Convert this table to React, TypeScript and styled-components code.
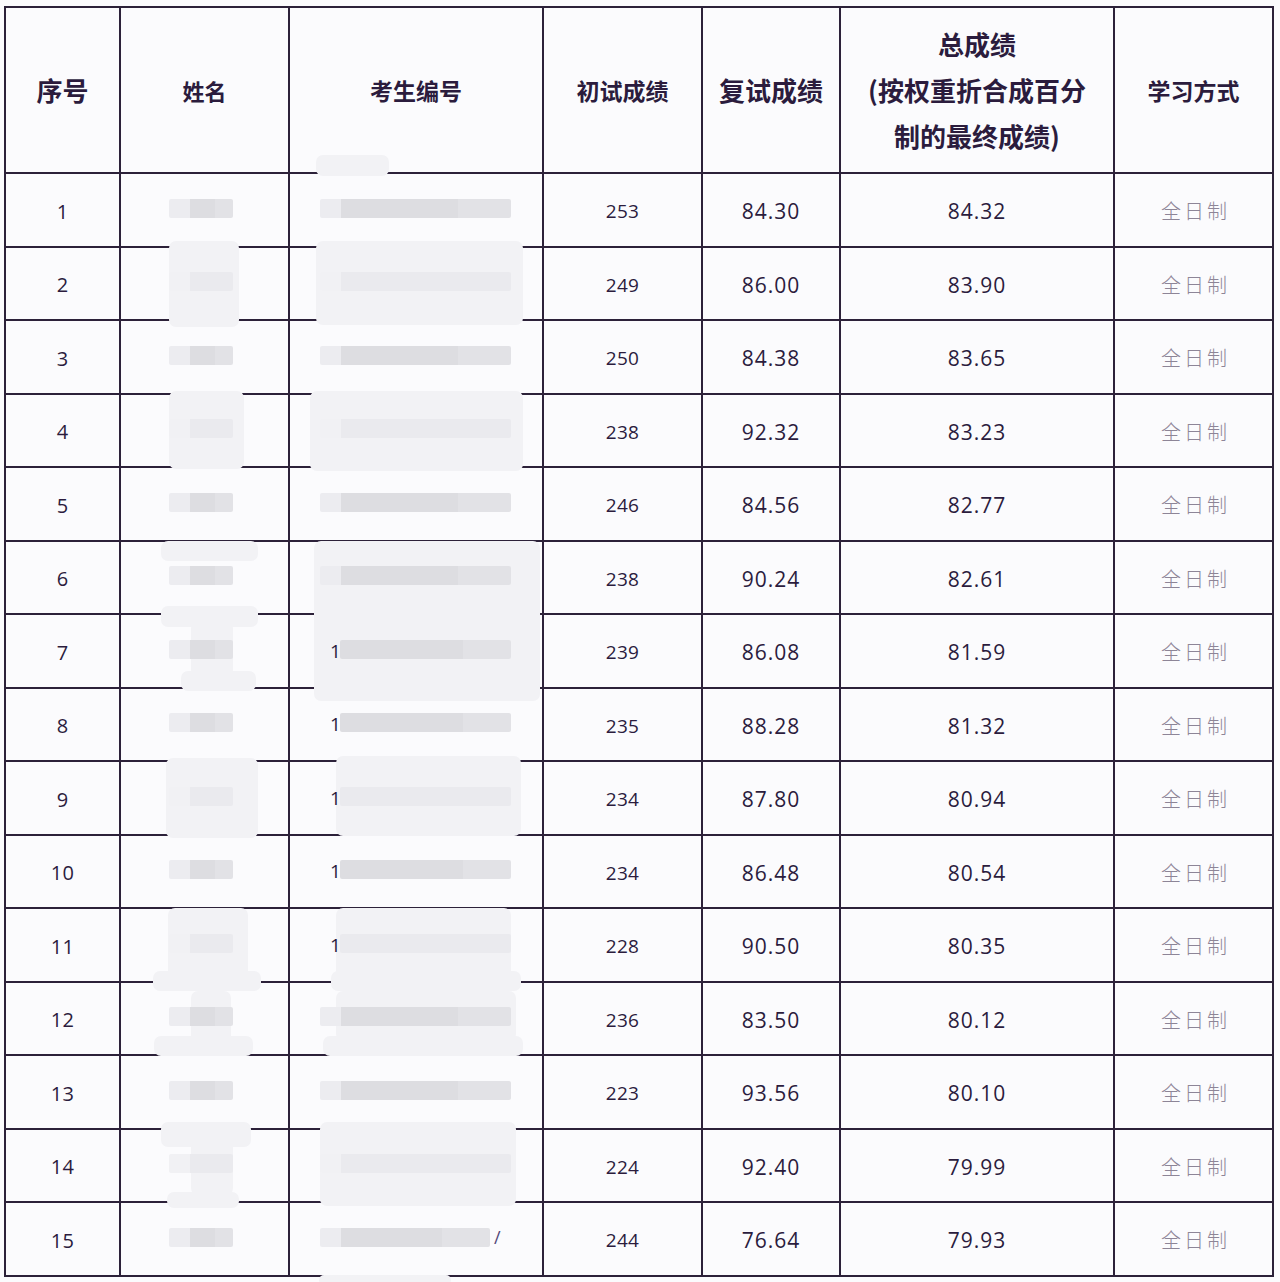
import React from "react";
import styled, { createGlobalStyle } from "styled-components";

const LINE = "#2c2139";
const INK = "#2b1c3d";

const GlobalStyle = createGlobalStyle`
  html, body {
    margin: 0;
    padding: 0;
    background: #fbfbfd;
  }
`;

const Page = styled.div`
  min-height: 1282px;
  padding: 6px 0 0 4px;
  box-sizing: border-box;
  background: #fbfbfd;
  overflow: hidden;
`;

const Sheet = styled.div`
  width: 1270px;
  box-sizing: border-box;
  border-top: 2px solid ${LINE};
  border-left: 2px solid ${LINE};
`;

const Row = styled.div<{ $h: number }>`
  display: grid;
  grid-template-columns: 115px 169px 254px 159px 138px 274px 159px;
  height: ${(p) => p.$h}px;
`;

const Cell = styled.div<{ $start?: boolean }>`
  position: relative;
  box-sizing: border-box;
  border-right: 2px solid ${LINE};
  border-bottom: 2px solid ${LINE};
  display: flex;
  align-items: center;
  justify-content: ${(p) => (p.$start ? "flex-start" : "center")};
`;

const HeadText = styled.div<{ $size: number }>`
  font-family: "Noto Sans CJK SC", "Noto Sans", sans-serif;
  font-weight: 700;
  font-size: ${(p) => p.$size}px;
  line-height: 46px;
  color: ${INK};
  text-align: center;
  white-space: nowrap;
`;

const Num = styled.span<{ $size: number }>`
  font-family: "Open Sans", "Noto Sans", sans-serif;
  font-size: ${(p) => p.$size}px;
  letter-spacing: ${(p) => (p.$size > 20 ? 1 : 0.3)}px;
  color: ${INK};
  margin-top: 2px;
`;

const Mode = styled.span`
  font-family: "Noto Sans CJK SC", sans-serif;
  font-weight: 300;
  font-size: 20px;
  letter-spacing: 3px;
  color: #8d8597;
  margin: 1px 0 0 4px;
`;

const MaskRow = styled.div<{ $pad: number }>`
  position: relative;
  z-index: 2;
  display: flex;
  align-items: center;
  padding-left: ${(p) => p.$pad}px;
  margin-top: -4px;
`;

const Bar = styled.div<{ $w: number; $lite: number; $faint?: boolean }>`
  width: ${(p) => p.$w}px;
  height: 19px;
  border-radius: 2px;
  background: ${(p) =>
    p.$faint
      ? `linear-gradient(90deg, #f1f1f4 0 ${p.$lite}px, #eaeaee ${p.$lite}px 100%)`
      : `linear-gradient(90deg, #ececf0 0 ${p.$lite}px, #dddde1 ${p.$lite}px 72%, #e2e2e6 72% 100%)`};
`;

const Prefix = styled.span`
  font-family: "Open Sans", sans-serif;
  font-size: 19px;
  color: ${INK};
  width: 10px;
  margin-top: 3px;
`;

const Slash = styled.span`
  font-family: "Open Sans", sans-serif;
  font-size: 18px;
  color: #55497a;
  margin-left: 4px;
`;

const Patch = styled.div<{ $l: number; $t: number; $w: number; $h: number }>`
  position: absolute;
  z-index: 1;
  left: ${(p) => p.$l}px;
  top: ${(p) => p.$t}px;
  width: ${(p) => p.$w}px;
  height: ${(p) => p.$h}px;
  border-radius: 7px;
  background: #f2f2f5;
`;

type Blot = [number, number, number, number];

type Entry = {
  n: number;
  first: number;
  second: string;
  total: string;
  namePatch?: Blot[];
  idPatch?: Blot[];
  prefix?: boolean;
  slash?: boolean;
  faint?: boolean;
};

const rows: Entry[] = [
  { n: 1, first: 253, second: "84.30", total: "84.32", idPatch: [[26, -19, 73, 21]] },
  {
    n: 2, first: 249, second: "86.00", total: "83.90", faint: true,
    namePatch: [[48, -7, 70, 86]],
    idPatch: [[26, -7, 207, 84]],
  },
  { n: 3, first: 250, second: "84.38", total: "83.65" },
  {
    n: 4, first: 238, second: "92.32", total: "83.23", faint: true,
    namePatch: [[48, -4, 75, 78]],
    idPatch: [[20, -4, 213, 80]],
  },
  { n: 5, first: 246, second: "84.56", total: "82.77" },
  {
    n: 6, first: 238, second: "90.24", total: "82.61",
    namePatch: [[40, -1, 97, 20]],
    idPatch: [[24, -1, 226, 160]],
  },
  {
    n: 7, first: 239, second: "86.08", total: "81.59", prefix: true,
    namePatch: [[40, -9, 97, 21], [70, 6, 42, 56], [60, 56, 75, 20]],
  },
  { n: 8, first: 235, second: "88.28", total: "81.32", prefix: true },
  {
    n: 9, first: 234, second: "87.80", total: "80.94", prefix: true, faint: true,
    namePatch: [[45, -4, 92, 80]],
    idPatch: [[46, -6, 185, 80]],
  },
  { n: 10, first: 234, second: "86.48", total: "80.54", prefix: true },
  {
    n: 11, first: 228, second: "90.50", total: "80.35", prefix: true, faint: true,
    namePatch: [[47, -1, 80, 82], [32, 62, 108, 20]],
    idPatch: [[46, -1, 175, 82], [41, 62, 190, 20]],
  },
  {
    n: 12, first: 236, second: "83.50", total: "80.12",
    namePatch: [[70, 8, 40, 55], [33, 53, 99, 20]],
    idPatch: [[46, 8, 180, 50], [33, 53, 200, 20]],
  },
  { n: 13, first: 223, second: "93.56", total: "80.10" },
  {
    n: 14, first: 224, second: "92.40", total: "79.99", faint: true,
    namePatch: [[40, -8, 90, 25], [70, 10, 42, 55], [46, 62, 72, 16]],
    idPatch: [[30, -8, 196, 84]],
  },
  { n: 15, first: 244, second: "76.64", total: "79.93", slash: true, idPatch: [[29, 72, 132, 10]] },
];

const lineAt = (k: number) => Math.round(174 + 73.53 * k);

const Header = () => (
  <Row $h={166}>
    <Cell>
      <HeadText $size={26}>序号</HeadText>
    </Cell>
    <Cell>
      <HeadText $size={22}>姓名</HeadText>
    </Cell>
    <Cell>
      <HeadText $size={23}>考生编号</HeadText>
    </Cell>
    <Cell>
      <HeadText $size={23}>初试成绩</HeadText>
    </Cell>
    <Cell>
      <HeadText $size={26}>复试成绩</HeadText>
    </Cell>
    <Cell>
      <HeadText $size={26}>
        总成绩
        <br />
        (按权重折合成百分
        <br />
        制的最终成绩)
      </HeadText>
    </Cell>
    <Cell>
      <HeadText $size={23}>学习方式</HeadText>
    </Cell>
  </Row>
);

const Patches = ({ list }: { list?: Blot[] }) => (
  <>
    {list?.map(([l, t, w, h], i) => (
      <Patch key={i} $l={l} $t={t} $w={w} $h={h} />
    ))}
  </>
);

const DataRow = ({ r, h }: { r: Entry; h: number }) => (
  <Row $h={h}>
    <Cell>
      <Num $size={20}>{r.n}</Num>
    </Cell>
    <Cell $start>
      <Patches list={r.namePatch} />
      <MaskRow $pad={48}>
        <Bar $w={64} $lite={21} $faint={r.faint} />
      </MaskRow>
    </Cell>
    <Cell $start>
      <Patches list={r.idPatch} />
      {r.prefix ? (
        <MaskRow $pad={40}>
          <Prefix>1</Prefix>
          <Bar $w={171} $lite={0} $faint={r.faint} />
        </MaskRow>
      ) : (
        <MaskRow $pad={30}>
          <Bar $w={r.slash ? 170 : 191} $lite={21} $faint={r.faint} />
          {r.slash && <Slash>/</Slash>}
        </MaskRow>
      )}
    </Cell>
    <Cell>
      <Num $size={19}>{r.first}</Num>
    </Cell>
    <Cell>
      <Num $size={21}>{r.second}</Num>
    </Cell>
    <Cell>
      <Num $size={21}>{r.total}</Num>
    </Cell>
    <Cell>
      <Mode>全日制</Mode>
    </Cell>
  </Row>
);

export default function App() {
  return (
    <Page>
      <GlobalStyle />
      <Sheet>
        <Header />
        {rows.map((r, i) => (
          <DataRow key={r.n} r={r} h={lineAt(i + 1) - lineAt(i)} />
        ))}
      </Sheet>
    </Page>
  );
}
